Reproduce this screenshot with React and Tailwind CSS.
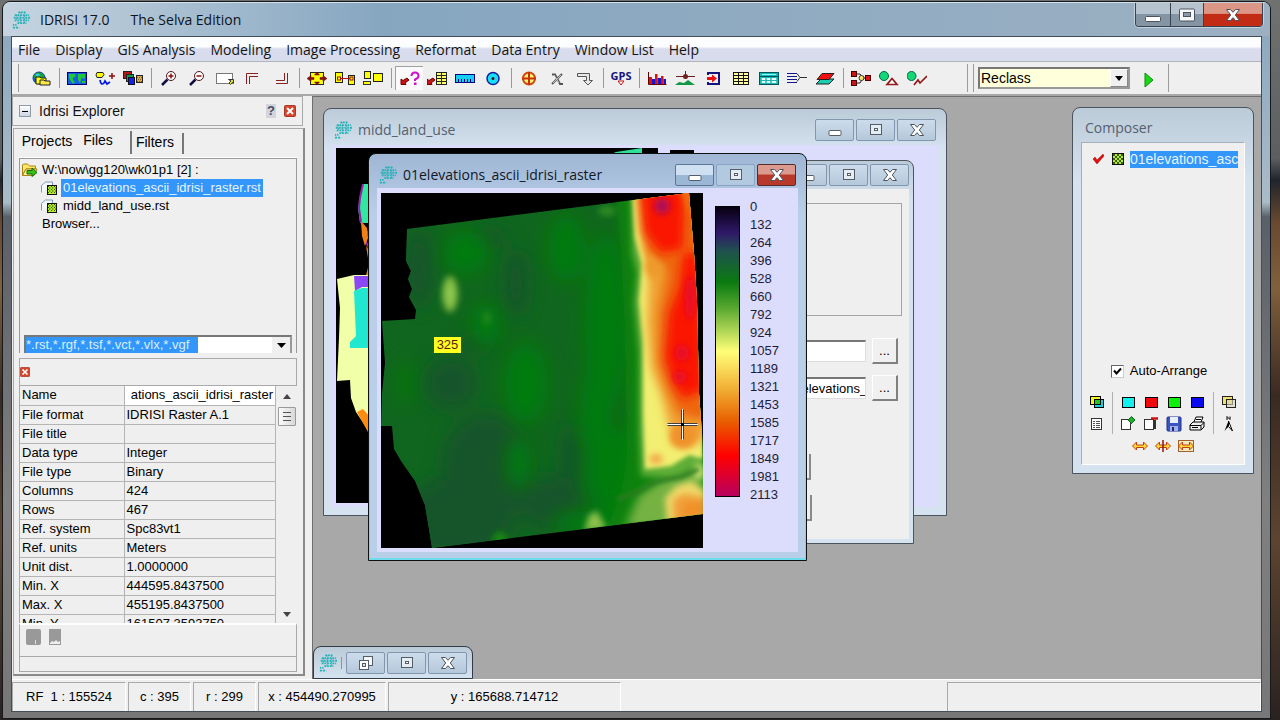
import React from 'react';

const UI = "font-['Open_Sans','Noto_Sans',sans-serif]";

/* ---------- shared glyphs ---------- */

function Globe({ className = 'w-[18px] h-[18px]' }) {
  return (
    <svg viewBox="0 0 20 20" className={className + ' shrink-0'} aria-hidden="true">
      <g stroke="#1fb3b6" strokeWidth="2" fill="none">
        <path d="M7 1.5H16" strokeDasharray="2 1" />
        <path d="M3 4.5H19" strokeDasharray="2 1" />
        <path d="M2 7.5H20" strokeDasharray="2.2 1" />
        <path d="M3 10.5H19" strokeDasharray="2 1" />
        <path d="M6 13.5H16" strokeDasharray="2 1" />
        <path d="M1 15.5H5" strokeDasharray="1.5 1" />
        <path d="M1 18.5H8" strokeDasharray="2.4 1" />
      </g>
      <path d="M9 1V15M14 1V14M5 4V11" stroke="#2aa7b4" strokeWidth="1" strokeDasharray="2 1.5" fill="none" />
    </svg>
  );
}

function MinGlyph() {
  return (
    <svg viewBox="0 0 14 12" className="w-[14px] h-3" aria-hidden="true">
      <rect x="1" y="6.5" width="12" height="5" rx="1" fill="#fff" stroke="#555c66" />
    </svg>
  );
}
function MaxGlyph() {
  return (
    <svg viewBox="0 0 14 14" className="w-[14px] h-[14px]" aria-hidden="true">
      <rect x="1.5" y="1.5" width="11" height="10" fill="#e4ecf4" stroke="#555c66" />
      <rect x="5.5" y="5.5" width="3" height="2" fill="#fff" stroke="#555c66" />
    </svg>
  );
}
function CloseGlyph() {
  return (
    <svg viewBox="0 0 16 14" className="w-4 h-[14px]" aria-hidden="true">
      <path d="M1.5 1.5H5.5L8 4.3L10.5 1.5H14.5L10.3 7L14.5 12.5H10.5L8 9.7L5.500 12.5H1.500L5.700 7Z" fill="#fff" stroke="#4c535e" strokeLinejoin="round" />
    </svg>
  );
}
function RestoreGlyph() {
  return (
    <svg viewBox="0 0 16 16" className="w-4 h-4" aria-hidden="true">
      <rect x="5.500" y="1.500" width="9" height="9" fill="#f4f8fb" stroke="#555c66" />
      <rect x="1.500" y="5.500" width="9" height="9" fill="#fff" stroke="#555c66" />
      <rect x="4.500" y="8.500" width="3" height="3" fill="#dde6ee" stroke="#555c66" />
    </svg>
  );
}

function Controls({ active, first = 'min' }) {
  const box = 'w-[39px] h-[22px] flex items-center justify-center border rounded-[2px] ';
  const plain = box + 'border-[#8196af] bg-linear-to-b from-[#cddcec] to-[#b4c8da]';
  return (
    <div className="flex gap-0.5">
      <button aria-label={first === 'min' ? 'Minimize' : 'Restore'} className={active ? box + 'border-[#5c7796] bg-linear-to-b from-[#cfe0f2] from-50% to-[#9bb7d6] to-50%' : plain}>
        {first === 'min' ? <MinGlyph /> : <RestoreGlyph />}
      </button>
      <button aria-label="Maximize" className={active ? box + 'border-[#8ba3c2] bg-[#b2c9e0]' : plain}><MaxGlyph /></button>
      <button aria-label="Close" className={active ? box + 'border-[#572a2c] bg-linear-to-b from-[#dc9a8e] from-45% to-[#b8382a] to-50%' : plain}><CloseGlyph /></button>
    </div>
  );
}

function ChildWindow({ title, active, logo = true, controls = true, className, frame, titleClass = 'h-[34px]', children }) {
  return (
    <section className={'absolute flex flex-col border rounded-t-lg px-2 pb-2 overflow-hidden ' + frame + ' ' + className}>
      <header className={'flex shrink-0 items-center ' + titleClass}>
        {logo && <span className="ml-0.5 mr-1.5 flex"><Globe /></span>}
        <h2 className={UI + ' flex-1 text-sm whitespace-nowrap ' + (active ? 'text-[#101828]' : 'text-[#54606f]')}>{title}</h2>
        {controls && <Controls active={active} />}
      </header>
      {children}
    </section>
  );
}

/* ---------- toolbar icons ---------- */

const ICONS = {
  open: (<>
    <circle cx="8" cy="7" r="6" fill="#16a832" stroke="#103a9c" /><path d="M2 8q2 5 6 5v-4l-3-3z" fill="#1c58e0" /><path d="M4 4q3-3 5 0l-2 2z" fill="#3cc8f0" />
    <path d="M5 6h4l1 1h5v6H5z" fill="#ff0" stroke="#222" /><path d="M9 9h4l1 1h5v4H9z" fill="#ffe94a" stroke="#222" />
  </>),
  map: (<>
    <rect x=".5" y="1.500" width="19" height="12" fill="#1560e0" stroke="#000080" />
    <path d="M2 3h6l1 2-3 2v2l2 2-2 2-3-4-1-3zM11 3h7v4l-2 1-1-2-1 3-1 3-2-3zM15 10h3v2h-3z" fill="#1ec83a" />
  </>),
  digit: (<>
    <path d="M2 1.500h6l1 2-2 3H2L1 4z" fill="#ff0" stroke="#222" /><path d="M5 9q1 6 4 3l1-2 2 3 3-2" fill="none" stroke="#0018e0" strokeWidth="1.700" />
    <path d="M17 2v6M14 5h6" stroke="#8c1010" strokeWidth="1.500" />
  </>),
  layers: (<>
    <rect x=".5" y=".5" width="8" height="7" fill="#b01818" stroke="#222" /><rect x="3.500" y="3.500" width="7" height="7" fill="#0a9a48" stroke="#222" />
    <rect x="5.500" y="6.500" width="6" height="7" fill="#1522e8" stroke="#111" /><rect x="13.500" y="4.500" width="6" height="7" fill="#d8a850" stroke="#222" />
    <path d="M14 6.500h5M15 8.500h4M14 10.500h5" stroke="#8a6418" strokeDasharray="1 1" />
  </>),
  zin: (<>
    <circle cx="12" cy="5" r="4.500" fill="#fff" stroke="#4a1818" /><path d="M9.500 5h5M12 2.500v5" stroke="#8c1010" strokeWidth="1.500" /><path d="M8.500 8.500L3 14" stroke="#101040" strokeWidth="2.500" />
  </>),
  zout: (<>
    <circle cx="12" cy="5" r="4.500" fill="#fff" stroke="#4a1818" /><path d="M9.500 5h5" stroke="#8c1010" strokeWidth="1.500" /><path d="M8.500 8.500L3 14" stroke="#101040" strokeWidth="2.500" />
  </>),
  pane: (<><rect x="1.500" y="2.500" width="16" height="10" fill="#fff" stroke="#777" /><path d="M13.500 8.500h5v4l-1-1-2 2-1.500-1.500 2-2z" fill="#e6e010" stroke="#333" /></>),
  tl: (<path d="M3.500 13V2.500H15M6.500 13V5.500H15" fill="none" stroke="#8a2020" />),
  br: (<path d="M16.500 2V12.500H5M13.500 2V9.500H5" fill="none" stroke="#8a2020" />),
  fit: (<>
    <rect x="3.500" y="1.500" width="13" height="12" fill="#ff0" stroke="#222" />
    <path d="M0 7.500l4-3v2h3v2H4v2zM20 7.500l-4-3v2h-3v2h3v2zM10 1l2.500 3h-5zM10 14l2.500-3h-5z" fill="#8c1010" stroke="#5c0808" strokeWidth=".5" />
  </>),
  link1: (<><rect x=".5" y="1.500" width="7" height="10" fill="#ff0" stroke="#222" /><rect x="13.500" y="4.500" width="6" height="9" fill="#ff0" stroke="#222" /><path d="M5 7.500h11" stroke="#c01010" /><rect x="2.500" y="6" width="3" height="3" fill="#ff0" stroke="#a01010" /><rect x="15" y="6" width="3" height="3" fill="#ff0" stroke="#a01010" /></>),
  link2: (<><rect x="1.500" y=".5" width="6" height="7" fill="#ff0" stroke="#222" /><rect x=".5" y="10.500" width="7" height="3" fill="#ff0" stroke="#333" /><rect x="10.500" y="2.500" width="9" height="8" fill="#ff0" stroke="#222" /></>),
  query: (<><path d="M1 13.500V8l2 1.500L7 7l2 2-4 3 1 1.500z" fill="#c81414" stroke="#700" /><path d="M11.500 5q0-3.500 3.500-3.500T18.500 5q0 2-3.500 3.500V10" fill="none" stroke="#d010d0" strokeWidth="2" /><rect x="14" y="11.500" width="2.500" height="2.500" fill="#d010d0" /></>),
  qtable: (<><path d="M0 13.500V8l2 1.500L6 7l2 2-4 3 1 1.500z" fill="#c81414" stroke="#700" /><rect x="9.500" y="1.500" width="10" height="12" fill="#ff6" stroke="#222" /><path d="M10 4.500h9M10 7.500h9M10 10.500h9M14.500 2v11" stroke="#222" /></>),
  ruler: (<><rect x=".5" y="3.500" width="19" height="8" fill="#16cdf4" stroke="#000080" /><path d="M3.500 11V8M6.500 11V8M9.500 11V8M12.500 11V8M15.500 11V8" stroke="#000060" /></>),
  target: (<><circle cx="10" cy="7.500" r="6" fill="#16e0f8" stroke="#1020a0" strokeWidth="1.500" /><circle cx="10" cy="7.500" r="1.500" fill="#501020" /></>),
  cross: (<><circle cx="10" cy="7.500" r="6" fill="#fff27a" stroke="#d04a10" strokeWidth="2" /><path d="M10 1v13M3 7.500h14" stroke="#c83008" strokeWidth="2" /></>),
  scissors: (<><path d="M5 13L15 3M5 3.500h3l5 9.500h3" fill="none" stroke="#555" strokeWidth="2" /><path d="M6 12l8-8M7 4l5 8" stroke="#ddd" strokeWidth=".8" /></>),
  bent: (<path d="M2.500 2.500h12v7h3l-4.500 4.500L8.500 9.500h3v-4h-9z" fill="#e8e8e8" stroke="#555" />),
  hist: (<><path d="M1.500 1v12.500h18" stroke="#600" fill="none" /><path d="M2 13V6h3v7zM8 13V3h2.500v10zM14 13V5h2.500v8z" fill="#e01010" /><path d="M5 13V8h3v5zM10.500 13V7H14v6zM16.500 13V8H19v5z" fill="#1515d0" /></>),
  align: (<><path d="M10.500 0v8M1 5.500h19" stroke="#6c2020" /><circle cx="10.500" cy="5.500" r="2.500" fill="#702020" /><path d="M0 14l4-3 5 1 4-3 7 5z" fill="#109848" /></>),
  arrowbox: (<><path d="M5 4V2h11v11H5v-2" fill="none" stroke="#14147c" strokeWidth="2" /><path d="M4 6h5V3.500l5 4-5 4V9H4z" fill="#e81010" /></>),
  grid: (<><rect x="2.500" y="1.500" width="15" height="12" fill="#ffffa0" stroke="#111" /><path d="M3 4.500h14M3 7.500h14M3 10.500h14M7.500 2v11M12.500 2v11" stroke="#111" /></>),
  calc: (<><rect x=".5" y="1.500" width="19" height="12" fill="#18b8b8" stroke="#055" /><path d="M1 5.500h18" stroke="#055" /><path d="M3 3.500h14" stroke="#8ff" /><path d="M3 7.500h3v1H3zM8 7.500h3v1H8zM13 7.500h4v1h-4zM3 10.500h3v1H3zM8 10.500h3v1H8zM13 10.500h4v1h-4z" stroke="#e8ffff" /></>),
  lines: (<><path d="M0 2.500h10M0 5.500h10M0 8.500h10M0 11.500h10" stroke="#14148c" /><path d="M10 2.500l3 4h7M10 10.500l3-4" stroke="#333" fill="none" /></>),
  sheets: (<><path d="M1 13l5-5h13l-5 5z" fill="#18d0b0" stroke="#222" /><path d="M2 8.500l5-6h12l-5 6z" fill="#f01010" stroke="#222" /></>),
  model: (<><path d="M5 3h4l3 4-3 5H5M12 7h4" fill="none" stroke="#222" /><rect x=".5" y=".5" width="5" height="5" fill="#c81414" stroke="#400" /><rect x=".5" y="9.500" width="5" height="5" fill="#c81414" stroke="#400" /><circle cx="10.500" cy="7" r="2.500" fill="#ffe868" stroke="#333" /><rect x="14.500" y="4.500" width="5" height="5" fill="#e01414" stroke="#400" /></>),
  tri: (<><circle cx="5" cy="5" r="4.500" fill="#12d878" stroke="#064" /><path d="M13 7.500l5 6H8z" fill="#fff" stroke="#941818" strokeWidth="1.700" /></>),
  zig: (<><circle cx="4.500" cy="5" r="4.500" fill="#12d878" stroke="#064" /><path d="M7 14l4-5 2 3 7-7" fill="none" stroke="#941818" strokeWidth="1.700" /></>),
};

const GROUPS = [
  [['open', 'Open']],
  [['map', 'Display'], ['digit', 'Digitize'], ['layers', 'Composite']],
  [['zin', 'Zoom in'], ['zout', 'Zoom out'], ['pane', 'Zoom window'], ['tl', 'Previous extent'], ['br', 'Next extent']],
  [['fit', 'Full extent'], ['link1', 'Group link'], ['link2', 'Link windows']],
  [['query', 'Cursor inquiry'], ['qtable', 'Feature properties'], ['ruler', 'Measure'], ['target', 'Zone']],
  [['cross', 'Add point'], ['scissors', 'Delete feature'], ['bent', 'Redirect']],
  [['gps', 'GPS']],
  [['hist', 'Histogram'], ['align', 'Stretch'], ['arrowbox', 'Import'], ['grid', 'Database'], ['calc', 'Image calculator'], ['lines', 'Edit'], ['sheets', 'Overlay']],
  [['model', 'Macro modeler'], ['tri', 'Change modeler'], ['zig', 'Trends']],
];

function ToolButton({ id, label }) {
  if (id === 'gps') {
    return (
      <button aria-label={label} className="w-7 h-6 flex flex-col items-center justify-center">
        <span className="font-['Open_Sans',sans-serif] font-bold text-[11px] leading-[9px] text-[#14147c]">GPS</span>
        <svg viewBox="0 0 8 6" className="w-2 h-1.5" aria-hidden="true"><path d="M1 1h6L4 5z" fill="#fff" stroke="#c01010" /></svg>
      </button>
    );
  }
  return (
    <button aria-label={label} className={'w-7 h-6 flex items-center justify-center ' + (id === 'query' ? 'bg-[#fafafa] border-t border-l border-[#a0a0a0]' : '')}>
      <svg viewBox="0 0 20 15" className="w-5 h-[15px]" aria-hidden="true">{ICONS[id]}</svg>
    </button>
  );
}

function Toolbar() {
  return (
    <div className="flex h-[34px] shrink-0 items-stretch bg-[#efefef] border-b-2 border-[#a8a8a8] pl-[6px]">
      <div className="flex items-center border-l border-[#9c9c9c] my-0.5 pl-2">
        {GROUPS.map((g, i) => (
          <React.Fragment key={i}>
            {i > 0 && <span className="w-2 flex justify-center"><span className="w-px h-5 bg-[#999]" /></span>}
            {g.map(([id, label]) => <ToolButton key={id} id={id} label={label} />)}
          </React.Fragment>
        ))}
      </div>
      <div className="ml-9 flex items-center border-l border-[#9c9c9c] my-0.5 pl-[5px] border-r pr-3">
        <div className="flex items-center h-full border-l border-[#9c9c9c] pl-1">
          <div className="relative flex w-[152px] h-[22px] border-2 border-[#777] border-r-[#999] border-b-[#999] bg-[#ffffdc]">
            <select aria-label="Module" className="w-full appearance-none bg-transparent pl-px text-sm leading-4 text-black outline-none">
              <option>Reclass</option>
            </select>
            <span className="pointer-events-none absolute right-0 top-0 bottom-0 w-[18px] bg-[#f0f0f0] border border-[#fff] border-r-[#888] border-b-[#888] flex items-center justify-center">
              <svg viewBox="0 0 8 5" className="w-2 h-[5px]" aria-hidden="true"><path d="M0 0h8L4 5z" fill="#000" /></svg>
            </span>
          </div>
          <button aria-label="Run" className="ml-3 w-3.5 h-5 pt-1 flex items-center justify-center">
            <svg viewBox="0 0 10 16" className="w-2.5 h-4" aria-hidden="true"><path d="M1 1l8 7-8 7z" fill="#18d818" stroke="#0a8a0a" /></svg>
          </button>
        </div>
      </div>
      <div className="flex-1" />
    </div>
  );
}

/* ---------- explorer ---------- */

function RedX({ className }) {
  return (
    <svg viewBox="0 0 12 12" className={className} aria-hidden="true">
      <rect x=".5" y=".5" width="11" height="11" rx="1" fill="#d8452c" stroke="#a83a28" />
      <path d="M3 3l6 6M9 3l-6 6" stroke="#fff" strokeWidth="2" />
    </svg>
  );
}

function RasterIcon() {
  return (
    <svg viewBox="0 0 16 14" className="w-4 h-3.5 shrink-0" aria-hidden="true">
      <path d="M.5 11.500V4.500l4-3.500h7v4" fill="#f4f8fd" stroke="#7f97bd" />
      <rect x="6.500" y="4.500" width="9" height="9" fill="#b4ee28" stroke="#111" />
      <path d="M7 5.500h8M7 8.500h8M7 11.500h8" stroke="#2a5008" strokeDasharray="1 2" />
      <path d="M8 7h7M8 10h7" stroke="#2a5008" strokeDasharray="1.500 1.500" />
    </svg>
  );
}

const META = [
  ['Name', ''],
  ['File format', 'IDRISI Raster A.1'],
  ['File title', ''],
  ['Data type', 'Integer'],
  ['File type', 'Binary'],
  ['Columns', '424'],
  ['Rows', '467'],
  ['Ref. system', 'Spc83vt1'],
  ['Ref. units', 'Meters'],
  ['Unit dist.', '1.0000000'],
  ['Min. X', '444595.8437500'],
  ['Max. X', '455195.8437500'],
  ['Min. Y', '161507.3593750'],
];

function Explorer() {
  return (
    <aside className="w-[300px] shrink-0 flex flex-col bg-[#efefef] pr-[7px] pb-[3px] text-[13px]">
      <header className="flex items-center h-[30px] shrink-0 border border-[#a9a9a9] px-[6px] mr-[2px]">
        <button aria-label="Collapse" className="w-3 h-3 border border-[#8f9aa8] bg-linear-to-b from-white to-[#cdd5e0] flex items-center justify-center">
          <span className="w-1.5 h-px bg-black" />
        </button>
        <h2 className="ml-2 flex-1 text-sm text-[#111]">Idrisi Explorer</h2>
        <button aria-label="Help" className="w-2.5 h-3.5 bg-[#d4d4dc] font-bold text-[13px] leading-3.5 text-[#444c60]">?</button>
        <button aria-label="Close explorer" className="ml-2"><RedX className="w-3 h-3" /></button>
      </header>

      <div className="mt-[2px] flex-1 min-h-0 flex flex-col border border-[#a9a9a9] border-r-2 border-b-2 border-r-[#8a8a8a] border-b-[#8a8a8a] ml-px pt-px">
        <div className="flex items-end h-6 shrink-0 pl-0.5" role="tablist">
          <button role="tab" aria-selected="false" className="h-[22px] w-[62px] pb-1 text-sm leading-4">Projects</button>
          <button role="tab" aria-selected="true" className="h-[23px] w-[54px] pb-1.5 pr-3 border-r-2 border-[#777] text-sm leading-4">Files</button>
          <button role="tab" aria-selected="false" className="h-[21px] w-[52px] pb-1 pr-1 border-r-2 border-[#777] text-sm leading-4">Filters</button>
        </div>

        <div className="flex-1 min-h-0 flex flex-col border-t border-[#fff] mt-[3px] ml-[5px] mr-1.5 mb-[2px]">
          <div className="h-[195px] shrink-0 flex flex-col border border-b-0 border-[#9a9a9a] pt-0.5 pr-0.5">
            <ul className="flex-1">
              <li className="flex items-center h-[18px] gap-1 pl-0.5">
                <svg viewBox="0 0 16 14" className="w-4 h-3.5" aria-hidden="true">
                  <path d="M.5 12.500V2l1-1h4l2 2h6v3H4z" fill="#ffe868" stroke="#a88410" /><path d="M.5 12.500L4 6h11l-3 6.500z" fill="#fff09a" stroke="#a88410" />
                  <path d="M5 7.500h5V5l5 4.500-5 4v-2.500H5z" fill="#38c018" stroke="#1a6a0a" />
                </svg>
                <span>W:\now\gg120\wk01p1 [2] :</span>
              </li>
              <li className="flex items-center h-[18px] gap-1 pl-[21px]">
                <RasterIcon /><span className="bg-[#3296fa] text-[#e6f4ff] leading-[18px] px-0.5 whitespace-nowrap">01elevations_ascii_idrisi_raster.rst</span>
              </li>
              <li className="flex items-center h-[18px] gap-1 pl-[21px]">
                <RasterIcon /><span className="px-0.5">midd_land_use.rst</span>
              </li>
              <li className="flex items-center h-[18px] pl-[22px]">Browser...</li>
            </ul>
            <div className="ml-1 mr-0.5 h-[18px] border-2 border-b-0 border-[#777] border-r-[#999] bg-white flex">
              <input aria-label="File filter" defaultValue="*.rst,*.rgf,*.tsf,*.vct,*.vlx,*.vgf" className="w-[172px] h-4 bg-[#3296fa] text-[#d8f0ff] text-[13px] leading-4 outline-none" />
              <button aria-label="Filter list" className="ml-auto w-[18px] bg-[#f0f0f0] flex items-center justify-center">
                <svg viewBox="0 0 9 5" className="w-[9px] h-[5px]" aria-hidden="true"><path d="M0 0h9L4.500 5z" fill="#000" /></svg>
              </button>
            </div>
          </div>

          <div className="mt-[5px] h-7 shrink-0 border border-[#a9a9a9] flex items-center">
            <button aria-label="Close metadata"><RedX className="w-2.5 h-2.5" /></button>
          </div>

          <div className="flex-1 min-h-0 flex border-l border-[#a9a9a9]">
            <div className="flex-1 min-w-0 overflow-hidden">
              <table className="w-full table-fixed border-collapse">
                <tbody>
                  {META.map(([k, v]) => (
                    <tr key={k} className="h-[19px]">
                      <th scope="row" className="w-[104px] h-[19px] p-0 pl-0.5 text-left font-normal leading-[18px] border-b border-r border-[#b4b4b4]">{k}</th>
                      <td className={'h-[19px] p-0 pl-0.5 leading-[18px] border-b border-r border-[#b4b4b4] ' + (k === 'Name' ? 'bg-white' : '')}>
                        {k === 'Name'
                          ? <div className="flex justify-end overflow-hidden"><span className="whitespace-nowrap pr-0.5">ations_ascii_idrisi_raster</span></div>
                          : v}
                      </td>
                    </tr>
                  ))}
                </tbody>
              </table>
            </div>
            <div className="w-[21px] flex flex-col items-center py-1.5">
              <svg viewBox="0 0 8 5" className="w-2 h-[5px] mt-0.5" aria-hidden="true"><path d="M4 0l4 5H0z" fill="#444" /></svg>
              <span className="mt-2 w-[18px] h-[19px] border border-[#9a9a9a] rounded-[1px] bg-linear-to-r from-[#fafafa] to-[#d8d8d8] flex flex-col items-center justify-center gap-[3px]">
                <span className="w-2 h-px bg-[#555]" /><span className="w-2 h-px bg-[#555]" /><span className="w-2 h-px bg-[#555]" />
              </span>
              <svg viewBox="0 0 8 5" className="w-2 h-[5px] mt-auto" aria-hidden="true"><path d="M0 0h8L4 5z" fill="#444" /></svg>
            </div>
          </div>

          <div className="h-[34px] shrink-0 border border-t-2 border-[#a9a9a9] border-t-white flex items-start gap-2 pl-1.5 pt-1">
            <svg viewBox="0 0 15 16" className="w-[15px] h-4" aria-hidden="true"><rect width="15" height="16" rx="2" fill="#999" /><path d="M9.500 15v-4" stroke="#ddd" /></svg>
            <svg viewBox="0 0 12 16" className="w-3 h-4" aria-hidden="true"><rect width="12" height="16" fill="#999" /><path d="M1 14l2-2 2 1 2-2 2 2 2-1v3H1z" fill="#eee" /></svg>
          </div>
          <div className="h-[15px] shrink-0 border-b border-l border-r border-[#a9a9a9]" />
        </div>
      </div>
    </aside>
  );
}

/* ---------- maps ---------- */

function ElevationMap() {
  const outline = 'M26 36L308 0L313 60L316 108L318 200L321 240L322 280V321L51 355L48 336L44 312L34 288L20 268L13 256L11 233H0L1 200L4 170L1 128L34 126L35 117L28 104L31 96L27 86L30 78L25 68Z';
  return (
    <svg viewBox="0 0 322 355" className="w-[322px] h-[355px]" role="img" aria-label="Elevation raster">
      <defs>
        <clipPath id="dem"><path d={outline} /></clipPath>
        <filter id="b2" x="-50%" y="-50%" width="200%" height="200%"><feGaussianBlur stdDeviation="2" /></filter>
        <filter id="b3" x="-50%" y="-50%" width="200%" height="200%"><feGaussianBlur stdDeviation="3" /></filter>
        <filter id="b5" x="-50%" y="-50%" width="200%" height="200%"><feGaussianBlur stdDeviation="5" /></filter>
        <filter id="b10" x="-50%" y="-50%" width="200%" height="200%"><feGaussianBlur stdDeviation="9" /></filter>
      </defs>
      <rect width="322" height="355" fill="#000" />
      <g clipPath="url(#dem)">
        <rect width="322" height="355" fill="#10661e" />
        <g filter="url(#b10)" fill="#17552c">
          <ellipse cx="105" cy="275" rx="45" ry="55" /><ellipse cx="75" cy="325" rx="60" ry="40" />
          <ellipse cx="38" cy="75" rx="14" ry="40" /><ellipse cx="135" cy="90" rx="12" ry="34" />
          <ellipse cx="70" cy="190" rx="26" ry="26" /><ellipse cx="170" cy="310" rx="34" ry="26" />
          <ellipse cx="190" cy="265" rx="10" ry="35" /><ellipse cx="110" cy="45" rx="16" ry="8" />
          <ellipse cx="95" cy="150" rx="20" ry="8" />
        </g>
        <g filter="url(#b10)" fill="#057c08">
          <ellipse cx="85" cy="60" rx="22" ry="22" /><ellipse cx="185" cy="55" rx="18" ry="34" />
          <ellipse cx="145" cy="190" rx="22" ry="40" /><ellipse cx="25" cy="190" rx="6" ry="22" />
          <ellipse cx="225" cy="130" rx="22" ry="90" /><ellipse cx="138" cy="270" rx="12" ry="26" />
          <ellipse cx="238" cy="280" rx="34" ry="44" /><ellipse cx="105" cy="132" rx="14" ry="22" />
          <ellipse cx="215" cy="220" rx="16" ry="50" /><ellipse cx="205" cy="330" rx="34" ry="12" />
        </g>
        <path d="M235 0L240 60L244 140L246 260L240 300L215 360H330V0Z" fill="#0a820a" filter="url(#b5)" />
        <path d="M250 -5L251 60L256 80L253 110L258 160L258 240L260 283L290 285L322 270V-5Z" fill="#5fae38" filter="url(#b3)" />
        <path d="M258 302L280 287L322 272V335H244Z" fill="#74b242" filter="url(#b5)" />
        <path d="M251 -5L254 45L261 72L258 108L262 150L262 220L264 276L290 273L308 262L322 266V-5Z" fill="#f2ef72" filter="url(#b2)" />
        <path d="M258 -5L261 40L268 70L266 130L270 175L281 205L292 250L315 252L326 240V-5Z" fill="#f0a034" filter="url(#b5)" />
        <path d="M259 -5L262 38L266 62L286 78L278 120L278 170L288 200L298 222L326 228V-5Z" fill="#ee660c" filter="url(#b5)" />
        <g filter="url(#b5)" fill="#fa1206">
          <path d="M259 -5L264 40L280 60L302 56L304 -5Z" /><path d="M302 60L298 95L288 120L284 165L292 190L302 206L324 196L318 60Z" />
        </g>
        <g filter="url(#b3)">
          <ellipse cx="281" cy="13" rx="8" ry="8" fill="#b00a58" /><path d="M268 60L284 74L272 88L263 76Z" fill="#ee9a2c" />
          <ellipse cx="301" cy="160" rx="7" ry="8" fill="#e8082c" /><ellipse cx="309" cy="105" rx="5" ry="22" fill="#e8082c" />
          <ellipse cx="299" cy="184" rx="7" ry="6" fill="#e8082c" /><path d="M299 -4H310L312 30Z" fill="#f07010" />
          <ellipse cx="275" cy="266" rx="7" ry="5" fill="#f2a84c" /><ellipse cx="302" cy="244" rx="13" ry="12" fill="#f0922c" />
          <ellipse cx="318" cy="278" rx="5" ry="8" fill="#d0e478" />
          <path d="M286 330L284 305L295 293L310 288L324 298V330Z" fill="#efd868" />
          <path d="M292 330L292 306L303 300L324 304V330Z" fill="#f0a23a" />
          <path d="M303 310L322 308V322L300 325Z" fill="#f0902c" />
        </g>
        <path d="M235 306Q258 300 265 294T300 284L318 276" fill="none" stroke="#2c7c20" strokeWidth="4" filter="url(#b2)" />
        <g filter="url(#b3)">
          <ellipse cx="69" cy="101" rx="8" ry="18" fill="#7fb840" /><ellipse cx="69" cy="101" rx="5" ry="10" fill="#8cc850" />
          <ellipse cx="106" cy="125" rx="3" ry="7" fill="#2a8a1e" /><path d="M203 338L208 322L216 318L226 336Z" fill="#8cc04c" />
          <ellipse cx="119" cy="346" rx="7" ry="7" fill="#148a10" /><ellipse cx="226" cy="18" rx="9" ry="5" fill="#2f8c22" />
        </g>
      </g>
      <path d="M286.500 232h30M301.500 217v30" transform="translate(0 -.5)" stroke="#000" strokeWidth="3" />
      <path d="M286 231.500h14M303 231.500h14M301.500 216v14M301.500 233v14" stroke="#fff" strokeWidth="1.500" />
    </svg>
  );
}

function LandUseMap() {
  return (
    <svg viewBox="0 0 370 355" className="w-[370px] h-[355px]" role="img" aria-label="Land use raster">
      <path d="M0 0H322V355H0ZM334 2H358V12H334Z" fill="#000" />
      <path d="M280 4L306 0V6H275Z" fill="#30e09a" />
      <path d="M27 36H40V75H24L22 60Z" fill="#30e8a0" /><path d="M27 36L24 50L23 60L25 74L31 84L29 92L33 100" fill="none" stroke="#9a1fb0" strokeWidth="2" />
      <path d="M25 73L31 80L32 90L29 98L26 88Z" fill="#f08018" /><path d="M30 98L40 112V127H30L33 116Z" fill="#f08018" />
      <path d="M1 131L18 127H40V300L32 282L20 264L15 250L14 232L1 233L3 190L4 160Z" fill="#f0ffa8" />
      <path d="M18 128H40V139H26L19 143Z" fill="#8c48f8" /><path d="M18 143L26 140H40V200H14V194L20 188Z" fill="#20e8d0" />
      <path d="M21 264L27 261L33 268V286Z" fill="#ff8c10" />
    </svg>
  );
}

const LEGEND = [0, 132, 264, 396, 528, 660, 792, 924, 1057, 1189, 1321, 1453, 1585, 1717, 1849, 1981, 2113];

function DotsButton({ label }) {
  return <button aria-label={label} className="w-[26px] h-[26px] shrink-0 border border-white border-r-2 border-b-2 border-r-[#808080] border-b-[#808080] bg-[#f0f0f0] text-[13px] leading-3">...</button>;
}

/* ---------- composer ---------- */

function Swatch({ color, label }) {
  return <button aria-label={label} className={'w-[13px] h-[11px] border border-black ' + color} />;
}
function CIcon({ label, children, box = '0 0 16 16' }) {
  return <button aria-label={label} className="w-4 h-4"><svg viewBox={box} className="w-4 h-4" aria-hidden="true">{children}</svg></button>;
}

function Composer() {
  const arrow = 'M.5 8l4-4v3h7V4l4 4-4 4V9.500h-7V12z';
  const rule = <span className="w-px h-full bg-[#b0b0b0]" />;
  return (
    <ChildWindow title="Composer" logo={false} controls={false} titleClass="h-[34px] pl-1 pt-1.5" frame="border-[#4b535c] bg-linear-to-b from-[#bccbd8] to-[#d5e2ef] to-20%" className="right-[7px] top-[10px] w-[182px] h-[367px]">
      <div className="flex-1 flex flex-col bg-[#efefef] border border-[#a3b0bc] border-r-white border-b-white">
        <div className="flex items-start pt-2 pl-2.5">
          <svg viewBox="0 0 12 12" className="w-3 h-3 mt-0.5" aria-hidden="true"><path d="M1 6l2-2 2 3 6-6 1 2-7 8z" fill="#e01010" stroke="#a00808" strokeWidth=".5" /></svg>
          <svg viewBox="0 0 12 12" className="w-3 h-3 ml-2 mt-0.5" aria-hidden="true"><rect x=".5" y=".5" width="11" height="11" fill="#b4ee28" stroke="#111" /><path d="M1 2h10M1 6h10M1 10h10" stroke="#3a6010" strokeWidth="2" strokeDasharray="2 2" /><path d="M3 4h8M3 8h8" stroke="#3a6010" strokeWidth="2" strokeDasharray="2 2" /></svg>
          <span className="ml-1.5 whitespace-nowrap bg-[#3296fa] text-[#e6f4ff] text-sm leading-[17px]">01elevations_asc</span>
        </div>
        <label className="mt-auto -ml-2 flex items-center justify-center gap-1.5 text-[13px] leading-4">
          <span className="relative flex">
            <input type="checkbox" defaultChecked className="peer appearance-none w-[13px] h-[13px] bg-white border border-[#666] border-r-[#ccc] border-b-[#ccc]" />
            <svg viewBox="0 0 13 13" className="absolute inset-0 w-[13px] h-[13px] pointer-events-none hidden peer-checked:block" aria-hidden="true"><path d="M3 5.500l2.500 3L10 3.500" fill="none" stroke="#000" strokeWidth="2" /></svg>
          </span>
          Auto-Arrange
        </label>
        <div className="mt-[13px] h-[42px] flex items-stretch justify-center gap-[7px]">
          <div className="flex flex-col justify-between py-0.5">
            <CIcon label="Blend"><rect x="1.500" y="2.500" width="10" height="8" fill="#f8f020" stroke="#000" /><rect x="5.500" y="5.500" width="9" height="8" fill="#20d0d8" stroke="#000" /><rect x="5.500" y="5.500" width="6" height="5" fill="#20c820" stroke="#000" /></CIcon>
            <CIcon label="Properties"><rect x="2.500" y="2.500" width="10" height="11" fill="#fff" stroke="#333" /><path d="M4 5.500h2M7 5.500h4M4 7.500h2M7 7.500h4M4 9.500h2M7 9.500h4M4 11.500h2M7 11.500h4" stroke="#555" /></CIcon>
          </div>
          {rule}
          <div className="flex flex-col justify-between py-0.5">
            <div className="flex items-center h-4 gap-[10px] px-0.5">
              <Swatch color="bg-[#12f0f0]" label="Cyan" /><Swatch color="bg-[#f00a0a]" label="Red" /><Swatch color="bg-[#0cf00c]" label="Green" /><Swatch color="bg-[#0a0af0]" label="Blue" />
            </div>
            <div className="flex h-4 gap-[7px]">
              <CIcon label="Add layer"><rect x="1.500" y="3.500" width="9" height="10" fill="#fff" stroke="#333" /><path d="M11.500 8V5" stroke="#333" /><path d="M11.500 .5l3.500 3.500-3.500 3.500L8 4z" fill="#20b030" stroke="#0a6a18" /></CIcon>
              <CIcon label="Remove layer"><rect x="1.500" y="3.500" width="9" height="10" fill="#fff" stroke="#333" /><path d="M12 4v9" stroke="#333" strokeWidth="2" /><path d="M8 2.500h7" stroke="#d01010" strokeWidth="2.500" /></CIcon>
              <CIcon label="Save"><rect x="1" y="1" width="14" height="14" rx="1" fill="#3c54c0" stroke="#22308a" /><rect x="4" y="1" width="8" height="6" fill="#e8f0ff" /><rect x="4" y="10" width="8" height="5" fill="#a0b0e8" /><rect x="6" y="11" width="2" height="4" fill="#1c2878" /></CIcon>
              <CIcon label="Print"><path d="M5 6l2-5h7l-2 5" fill="#fff" stroke="#000" /><path d="M1 9l3-3h11v5l-3 3H1z" fill="#eee" stroke="#000" /><path d="M1 9.500h11v4M12 9.500l3-3M7 3.500h5M3 11.500h6" stroke="#000" fill="none" /></CIcon>
            </div>
          </div>
          {rule}
          <div className="flex flex-col justify-between py-0.5">
            <CIcon label="Transparency"><rect x="1.500" y="2.500" width="10" height="8" fill="#efe070" stroke="#222" /><rect x="5.500" y="5.500" width="9" height="8" fill="#d8d4c0" fillOpacity=".6" stroke="#222" /></CIcon>
            <CIcon label="Map north"><path d="M6 4V.5l3 3V.5" fill="none" stroke="#000" /><path d="M7.500 5L3.500 15l4-4.500V5z" fill="#000" /><path d="M7.500 5l4 10-4-4.500z" fill="#fff" stroke="#000" /></CIcon>
          </div>
        </div>
        <div className="mt-1 mb-2.5 flex justify-center gap-[7px]">
          <CIcon label="Stretch"><path d={arrow} fill="#ffd83a" stroke="#c04010" /></CIcon>
          <CIcon label="Stretch midpoint"><path d={arrow} fill="#ffd83a" stroke="#c04010" /><path d="M8 2v12" stroke="#901010" strokeWidth="1.500" /></CIcon>
          <CIcon label="Stretch full"><rect x=".5" y="2.500" width="15" height="11" fill="#f4e8c0" stroke="#a06030" /><path d={arrow} fill="#ffd83a" stroke="#c04010" /></CIcon>
        </div>
      </div>
    </ChildWindow>
  );
}

/* ---------- workspace ---------- */

function Workspace() {
  const inactive = 'border-[#4b535c] bg-linear-to-b from-[#bccbd8] to-[#d5e2ef] to-[40px]';
  return (
    <main className="relative flex-1 min-w-0 overflow-hidden bg-[#a8a8a8] border-l border-t border-[#6e6e6e]">
      <ChildWindow title="midd_land_use" frame={inactive} titleClass="h-9 pt-1.5 pr-0.5" className="left-[10px] top-[11px] w-[624px] h-[408px]">
        <div className="flex-1 bg-[#dcdcfc] pl-1 pt-[3px] overflow-hidden"><LandUseMap /></div>
      </ChildWindow>

      <ChildWindow title="" logo={false} frame={inactive} titleClass="h-[28px]" className="left-[440px] top-[63px] w-[161px] h-[384px] !px-1 !pb-1">
        <div className="flex-1 bg-[#efefef] flex flex-col pt-3.5 pr-[11px]">
          <div className="h-[113px] shrink-0 -mr-1 border border-[#a4a4a4]" />
          <div className="mt-[22px] flex items-center gap-1.5 pl-5">
            <input aria-label="Input file" className="min-w-0 flex-1 h-[22px] bg-white border border-t-2 border-[#777] border-b-[#ddd] border-r-[#ddd] outline-none" />
            <DotsButton label="Browse input" />
          </div>
          <div className="mt-[11px] flex items-center gap-1.5 pl-5">
            <input aria-label="Output file" defaultValue="01elevations_" className="min-w-0 flex-1 h-[22px] bg-white border border-t-2 border-[#777] border-b-[#ddd] border-r-[#ddd] text-[13px] pl-2 outline-none" />
            <DotsButton label="Browse output" />
          </div>
          <button aria-label="Save as file" className="mt-[53px] w-[53px] h-[26px] border-r-2 border-b-2 border-[#8a8a8a]" />
          <button aria-label="Run" className="mt-[15px] w-[54px] h-[26px] border-r-2 border-b-2 border-[#8a8a8a]" />
        </div>
      </ChildWindow>

      <ChildWindow title="01elevations_ascii_idrisi_raster" active frame="border-[#111] bg-linear-to-b from-[#9fb6d4] to-[#b9cfe9] to-[60px] shadow-[inset_0_-1px_0_1px_#6fdcee]" titleClass="h-[34px] pt-2 pr-0.5" className="left-[55px] top-[56px] w-[439px] h-[408px]">
        <div className="relative flex-1 flex items-start bg-[#dcdcfc] pl-1 pt-[5px]">
          <ElevationMap />
          <span className="absolute left-[57px] top-[149px] w-[27px] h-4 bg-[#ffff20] text-[#5a2010] text-[13px] leading-4 text-center">325</span>
          <div className="ml-3 mt-[13px] w-[25px] h-[291px] border border-black [background-image:linear-gradient(to_bottom,#060010_0%,#301868_9%,#205050_15%,#0a7a10_26%,#58a830_35%,#ffff78_50%,#f0a830_64%,#e86000_74%,#ff0000_86%,#b80060_100%)]" />
          <ul className="ml-2.5 mt-[5px] text-[13px] text-[#1c1c38]">
            {LEGEND.map((v) => <li key={v} className="h-[18px] leading-[18px]">{v}</li>)}
          </ul>
        </div>
      </ChildWindow>

      <Composer />

      <section className="absolute left-0 bottom-0 w-[160px] h-[33px] border border-[#333c46] rounded-t-lg bg-linear-to-b from-[#bccbd8] to-[#d5e2ef] flex items-center pl-[5px]">
        <Globe />
        <span className="mx-[4px] w-px h-3 bg-[#8a94a0]" />
        <Controls first="restore" />
      </section>
    </main>
  );
}

/* ---------- app ---------- */

const MENUS = ['File', 'Display', 'GIS Analysis', 'Modeling', 'Image Processing', 'Reformat', 'Data Entry', 'Window List', 'Help'];

function StatusCell({ className, children }) {
  return <div className={'flex items-center justify-center border-l border-t border-r border-[#a9a9a9] border-r-white whitespace-nowrap ' + className}>{children}</div>;
}

export default function App() {
  const cap = 'flex items-center justify-center h-[23px] border-r border-[#38424e] ';
  return (
    <div className="h-screen flex flex-col pt-px pl-0.5 pr-[9px] pb-px overflow-hidden font-['Liberation_Sans',Arial,sans-serif] text-black [background-image:linear-gradient(to_bottom,#6f7270_0%,#5c5e60_22%,#20242c_25%,#6a4a30_31%,#80603c_40%,#3a2a22_55%,#5c4430_75%,#2a2220_100%)]">
      <div className="flex-1 min-h-0 flex flex-col border border-[#15191e] rounded-t-lg overflow-hidden px-2 pb-1.5 [background-image:linear-gradient(to_bottom,#9fb5c8_0%,#8fa9c0_5%,#a9bcc8_28%,#5a6068_30%,#808080_70%,#777_100%)]">
        <header className="-mx-2 h-[34px] shrink-0 flex items-start bg-linear-to-r from-[#c6d4e0] via-[#86a6c0] via-30% to-[#9cb0c2] border-t border-[#d4e2ee]">
          <div className="flex items-center h-full pl-[9px] flex-1">
            <Globe />
            <h1 className={UI + ' ml-2.5 text-sm text-[#0c1420] whitespace-pre'}>IDRISI 17.0</h1>
            <span className={UI + ' ml-[21px] text-sm text-[#0c1420]'}>The Selva Edition</span>
          </div>
          <div className="mr-[7px] flex border border-t-0 border-r-0 border-[#38424e] rounded-b-[4px] overflow-hidden shadow-[0_0_0_1px_#c4d2de]">
            <button aria-label="Minimize" className={cap + 'w-[35px] bg-linear-to-b from-[#b6c3ce] from-50% to-[#8494a3] to-50%'}>
              <svg viewBox="0 0 18 12" className="w-[18px] h-3 mt-1" aria-hidden="true"><rect x="1.500" y="5.500" width="15" height="5" rx="1" fill="#fff" stroke="#4a5460" /></svg>
            </button>
            <button aria-label="Restore" className={cap + 'w-[33px] bg-linear-to-b from-[#b6c3ce] from-50% to-[#8494a3] to-50%'}>
              <svg viewBox="0 0 18 14" className="w-[18px] h-3.5" aria-hidden="true"><rect x="1.500" y="1" width="15" height="12" rx="1" fill="#f6f8fa" stroke="#4a5460" /><rect x="5.500" y="4.500" width="7" height="4" fill="#8a9aa8" stroke="#4a5460" /></svg>
            </button>
            <button aria-label="Close" className={cap + 'w-[59px] bg-linear-to-b from-[#dc9686] from-45% to-[#c22c14] to-50%'}><CloseGlyph /></button>
          </div>
        </header>

        <div className="flex-1 min-h-0 flex flex-col border border-[#444c55] bg-[#efefef]">
          <nav className={UI + ' h-[25px] shrink-0 flex items-center gap-[15px] pl-1.5 pt-0.5 text-sm text-[#141414] bg-linear-to-b from-[#fbfdfe] from-40% to-[#d8dcec] to-50% border-b border-[#b0b4bc]'}>
            {MENUS.map((m) => <button key={m} className="whitespace-nowrap">{m}</button>)}
          </nav>
          <Toolbar />
          <div className="flex-1 min-h-0 flex">
            <Explorer />
            <Workspace />
          </div>
          <footer className="h-8 shrink-0 flex items-stretch gap-0.5 border-t border-white pt-0.5 text-[13px] bg-[#efefef]">
            <StatusCell className="w-[114px]">RF&nbsp; 1 : 155524</StatusCell>
            <StatusCell className="w-[63px]">c : 395</StatusCell>
            <StatusCell className="w-[63px]">r : 299</StatusCell>
            <StatusCell className="w-[128px]">x : 454490.270995</StatusCell>
            <StatusCell className="w-[233px]">y : 165688.714712</StatusCell>
            <div className="flex-1" />
            <StatusCell className="w-[314px]" />
          </footer>
        </div>
      </div>
    </div>
  );
}
